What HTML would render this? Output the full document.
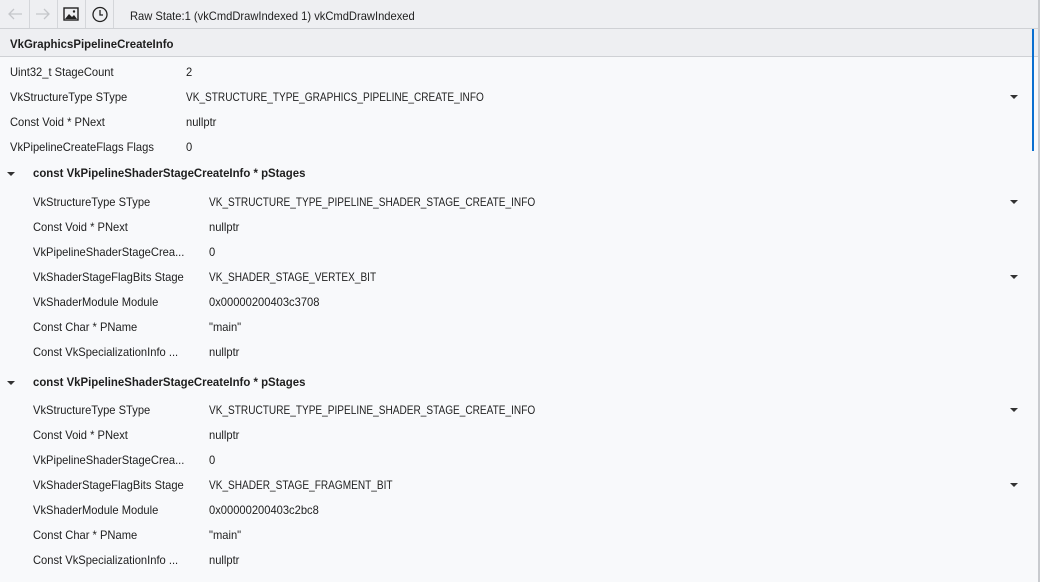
<!DOCTYPE html><html><head><style>
body{margin:0;width:1040px;height:582px;overflow:hidden;background:#f8f9fb;font-family:"Liberation Sans",sans-serif;font-size:12px;color:#1e1e1e;position:relative}
.tb{position:absolute;left:0;top:0;width:1040px;height:28px;background:#eeeff2;border-bottom:1px solid #cfd1d5}
.sep{position:absolute;top:0;width:1px;height:28px;background:#d4d6da}
.hd{position:absolute;left:0;top:29px;width:1038px;height:27px;background:#eeeff2;border-bottom:1px solid #cfd1d5}
.t{position:absolute;white-space:nowrap;line-height:14px;transform-origin:0 0;transform:translateY(1px) scaleX(0.93)}
.u{transform:translateY(1px) scaleX(0.84)}
.b{font-weight:bold;transform:translateY(1px) scaleX(0.95)}
.arr{position:absolute;width:0;height:0;border-left:4px solid transparent;border-right:4px solid transparent;border-top:4px solid #333}
</style></head><body>
<div class="tb">
<div class="sep" style="left:29px"></div><div class="sep" style="left:57px"></div><div class="sep" style="left:85px"></div><div class="sep" style="left:113px"></div>
<svg style="position:absolute;left:6px;top:6px" width="18" height="16"><path d="M16 8H3M8 3L3 8l5 5" stroke="#c4c6ca" stroke-width="1.3" fill="none"/></svg>
<svg style="position:absolute;left:34px;top:6px" width="18" height="16"><path d="M2 8h13M10 3l5 5-5 5" stroke="#c4c6ca" stroke-width="1.3" fill="none"/></svg>
<svg style="position:absolute;left:63px;top:7px" width="16" height="14"><rect x="1" y="1" width="14" height="12" fill="none" stroke="#222" stroke-width="1.4"/><path d="M2 12l4-5 3 3 2-2 3 4z" fill="#222"/><circle cx="11" cy="4.5" r="1.2" fill="#222"/></svg>
<svg style="position:absolute;left:91px;top:6px" width="18" height="17"><circle cx="9" cy="8.5" r="7" fill="none" stroke="#222" stroke-width="1.3"/><path d="M9 4v5h3" stroke="#222" stroke-width="1.3" fill="none"/></svg>
<div class="t" style="left:130px;top:8px">Raw State:1 (vkCmdDrawIndexed 1) vkCmdDrawIndexed</div>
</div>
<div class="hd"></div>
<div class="t b" style="left:10px;top:36px">VkGraphicsPipelineCreateInfo</div>
<div style="position:absolute;left:1032px;top:29px;width:2px;height:122px;background:#0a6fd0"></div>
<div style="position:absolute;left:1038px;top:0;width:2px;height:582px;background:#c9cbcf"></div>

<div class="t" style="left:10px;top:64px">Uint32_t StageCount</div><div class="t" style="left:186px;top:64px">2</div>
<div class="t" style="left:10px;top:89px">VkStructureType SType</div><div class="t u" style="left:186px;top:89px">VK_STRUCTURE_TYPE_GRAPHICS_PIPELINE_CREATE_INFO</div><div class="arr" style="left:1010px;top:95px"></div>
<div class="t" style="left:10px;top:114px">Const Void * PNext</div><div class="t" style="left:186px;top:114px">nullptr</div>
<div class="t" style="left:10px;top:139px">VkPipelineCreateFlags Flags</div><div class="t" style="left:186px;top:139px">0</div>

<div class="arr" style="left:7px;top:172px"></div><div class="t b" style="left:33px;top:165px">const VkPipelineShaderStageCreateInfo * pStages</div>
<div class="t" style="left:33px;top:194px">VkStructureType SType</div><div class="t u" style="left:209px;top:194px">VK_STRUCTURE_TYPE_PIPELINE_SHADER_STAGE_CREATE_INFO</div><div class="arr" style="left:1010px;top:200px"></div>
<div class="t" style="left:33px;top:219px">Const Void * PNext</div><div class="t" style="left:209px;top:219px">nullptr</div>
<div class="t" style="left:33px;top:244px">VkPipelineShaderStageCrea...</div><div class="t" style="left:209px;top:244px">0</div>
<div class="t" style="left:33px;top:269px">VkShaderStageFlagBits Stage</div><div class="t u" style="left:209px;top:269px">VK_SHADER_STAGE_VERTEX_BIT</div><div class="arr" style="left:1010px;top:275px"></div>
<div class="t" style="left:33px;top:294px">VkShaderModule Module</div><div class="t" style="left:209px;top:294px">0x00000200403c3708</div>
<div class="t" style="left:33px;top:319px">Const Char * PName</div><div class="t" style="left:209px;top:319px">"main"</div>
<div class="t" style="left:33px;top:344px">Const VkSpecializationInfo ...</div><div class="t" style="left:209px;top:344px">nullptr</div>

<div class="arr" style="left:7px;top:381px"></div><div class="t b" style="left:33px;top:374px">const VkPipelineShaderStageCreateInfo * pStages</div>
<div class="t" style="left:33px;top:402px">VkStructureType SType</div><div class="t u" style="left:209px;top:402px">VK_STRUCTURE_TYPE_PIPELINE_SHADER_STAGE_CREATE_INFO</div><div class="arr" style="left:1010px;top:408px"></div>
<div class="t" style="left:33px;top:427px">Const Void * PNext</div><div class="t" style="left:209px;top:427px">nullptr</div>
<div class="t" style="left:33px;top:452px">VkPipelineShaderStageCrea...</div><div class="t" style="left:209px;top:452px">0</div>
<div class="t" style="left:33px;top:477px">VkShaderStageFlagBits Stage</div><div class="t u" style="left:209px;top:477px">VK_SHADER_STAGE_FRAGMENT_BIT</div><div class="arr" style="left:1010px;top:483px"></div>
<div class="t" style="left:33px;top:502px">VkShaderModule Module</div><div class="t" style="left:209px;top:502px">0x00000200403c2bc8</div>
<div class="t" style="left:33px;top:527px">Const Char * PName</div><div class="t" style="left:209px;top:527px">"main"</div>
<div class="t" style="left:33px;top:552px">Const VkSpecializationInfo ...</div><div class="t" style="left:209px;top:552px">nullptr</div>
</body></html>
